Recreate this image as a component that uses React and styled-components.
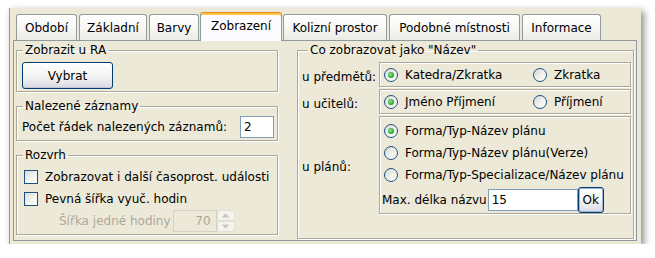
import React from "react";
import styled, { createGlobalStyle } from "styled-components";

const GlobalStyle = createGlobalStyle`
  html, body {
    margin: 0;
    padding: 0;
    background: #ffffff;
  }
  body {
    font-family: "DejaVu Sans", "Liberation Sans", sans-serif;
    font-size: 12px;
    color: #000000;
  }
  *, *::before, *::after {
    box-sizing: border-box;
  }
`;

const tabs = [
  { label: "Období", width: 61 },
  { label: "Základní", width: 68 },
  { label: "Barvy", width: 50 },
  { label: "Zobrazení", width: 82 },
  { label: "Kolizní prostor", width: 104 },
  { label: "Podobné místnosti", width: 131 },
  { label: "Informace", width: 79 },
];

export default function App() {
  return (
    <>
      <GlobalStyle />
      <Window>
        <TabRow>
          {tabs.map((t, i) => (
            <Tab key={t.label} $w={t.width} $active={i === 3}>
              {t.label}
            </Tab>
          ))}
        </TabRow>
        <Pane>
          <LeftColumn>
            <Group>
              <Title>Zobrazit u RA</Title>
              <GroupBody $pad="5px 5px 2px">
                <Button $w={91} $h={27}>Vybrat</Button>
              </GroupBody>
            </Group>
            <Group>
              <Title>Nalezené záznamy</Title>
              <GroupBody $pad="3px 3px 2px 5px">
                <Row>
                  <span>Počet řádek nalezených záznamů:</span>
                  <TextField $w={34} defaultValue="2" />
                </Row>
              </GroupBody>
            </Group>
            <Group>
              <Title>Rozvrh</Title>
              <GroupBody $pad="4px 7px 2px">
                <CheckRow>
                  <CheckBox />
                  Zobrazovat i další časoprost. události
                </CheckRow>
                <CheckRow>
                  <CheckBox />
                  Pevná šířka vyuč. hodin
                </CheckRow>
                <SpinRow>
                  <DisabledLabel>Šířka jedné hodiny</DisabledLabel>
                  <Spinner>
                    <SpinValue>70</SpinValue>
                    <SpinButtons>
                      <SpinArrow>
                        <svg width="9" height="5" viewBox="0 0 9 5">
                          <path d="M0.5 4.5 L4.5 0.5 L8.5 4.5 Z" fill="#c9c7ba" />
                        </svg>
                      </SpinArrow>
                      <SpinArrow>
                        <svg width="9" height="5" viewBox="0 0 9 5">
                          <path d="M0.5 0.5 L4.5 4.5 L8.5 0.5 Z" fill="#c9c7ba" />
                        </svg>
                      </SpinArrow>
                    </SpinButtons>
                  </Spinner>
                </SpinRow>
              </GroupBody>
            </Group>
          </LeftColumn>

          <RightGroup>
            <Title>Co zobrazovat jako "Název"</Title>
            <NameGrid>
              <RowLabel>u předmětů:</RowLabel>
              <OptionBox>
                <PairRow>
                  <RadioItem>
                    <Radio $on />
                    Katedra/Zkratka
                  </RadioItem>
                  <RadioItem>
                    <Radio />
                    Zkratka
                  </RadioItem>
                </PairRow>
              </OptionBox>

              <RowLabel>u učitelů:</RowLabel>
              <OptionBox>
                <PairRow>
                  <RadioItem>
                    <Radio $on />
                    Jméno Příjmení
                  </RadioItem>
                  <RadioItem>
                    <Radio />
                    Příjmení
                  </RadioItem>
                </PairRow>
              </OptionBox>

              <RowLabel>u plánů:</RowLabel>
              <OptionBox $col>
                <RadioLine>
                  <Radio $on />
                  Forma/Typ-Název plánu
                </RadioLine>
                <RadioLine>
                  <Radio />
                  Forma/Typ-Název plánu(Verze)
                </RadioLine>
                <RadioLine>
                  <Radio />
                  Forma/Typ-Specializace/Název plánu
                </RadioLine>
                <MaxRow>
                  <span>Max. délka názvu</span>
                  <TextField $w={90} defaultValue="15" />
                  <Button $w={26} $h={26} $focus>Ok</Button>
                </MaxRow>
              </OptionBox>
            </NameGrid>
          </RightGroup>
        </Pane>
      </Window>
    </>
  );
}

const Window = styled.div`
  margin: 8px 0 0 9px;
  width: 632px;
  height: 236px;
  background: #ece9d8;
  border-left: 1px solid #9c9a8e;
  padding: 4px 4px 3px 3px;
  display: flex;
  flex-direction: column;
  box-shadow: 3px 3px 7px rgba(0, 0, 0, 0.45);
`;

const TabRow = styled.div`
  height: 28px;
  display: flex;
  align-items: flex-end;
  gap: 2px;
  padding-left: 3px;
  flex-shrink: 0;
`;

const Tab = styled.div`
  position: relative;
  width: ${(p) => p.$w}px;
  height: ${(p) => (p.$active ? 29 : 26)}px;
  margin: ${(p) => (p.$active ? "0 -1px -1px -1px" : "0")};
  z-index: ${(p) => (p.$active ? 1 : 0)};
  display: flex;
  align-items: center;
  justify-content: center;
  padding-bottom: ${(p) => (p.$active ? 3 : 0)}px;
  border: 1px solid #919b9c;
  border-top-color: ${(p) => (p.$active ? "#e68b2c" : "#919b9c")};
  border-bottom: none;
  border-radius: 3px 3px 0 0;
  background: ${(p) =>
    p.$active
      ? "#fcfcfe"
      : "linear-gradient(180deg, #ffffff 0%, #f6f6f3 55%, #ecebe5 100%)"};
  box-shadow: ${(p) => (p.$active ? "inset 0 2px 0 #ffc83c" : "none")};
  white-space: nowrap;
`;

const Pane = styled.div`
  flex: 1;
  display: flex;
  gap: 19px;
  border: 1px solid #919b9c;
  padding: 2px 2px 1px 2px;
`;

const LeftColumn = styled.div`
  width: 262px;
  display: flex;
  flex-direction: column;
  gap: 7px;
  align-self: flex-start;
`;

const Group = styled.fieldset`
  margin: 0;
  padding: 0;
  min-width: 0;
  border: 1px solid #aca899;
  box-shadow: inset 1px 1px 0 #ffffff, 1px 1px 0 #ffffff;
`;

const RightGroup = styled(Group)`
  width: 337px;
  padding: 5px 2px 0 4px;
`;

const Title = styled.legend`
  margin-left: 6px;
  padding: 0 2px;
  line-height: 14px;
  height: 14px;
  white-space: nowrap;
`;

const GroupBody = styled.div`
  padding: ${(p) => p.$pad};
`;

const Row = styled.div`
  display: flex;
  align-items: center;
  justify-content: space-between;
  height: 22px;
`;

const TextField = styled.input`
  width: ${(p) => p.$w}px;
  height: 22px;
  border: 1px solid #7f9db9;
  background: #ffffff;
  padding: 0 3px;
  font: inherit;
  color: #000;
  outline: none;
`;

const Button = styled.div`
  width: ${(p) => p.$w}px;
  height: ${(p) => p.$h}px;
  display: flex;
  align-items: center;
  justify-content: center;
  border: 1px solid #003c74;
  border-radius: 3px;
  background: linear-gradient(
    180deg,
    #ffffff 0%,
    #f5f5f3 45%,
    #e6e6ec 80%,
    #d5d5df 100%
  );
  box-shadow: ${(p) =>
    p.$focus
      ? "inset 0 0 0 1px #9fb4d8"
      : "inset 0 -1px 0 #c8c8d4"};
  color: #000;
`;

const CheckRow = styled.label`
  display: flex;
  align-items: center;
  gap: 7px;
  height: 22px;
  white-space: nowrap;
`;

const CheckBox = styled.span`
  width: 14px;
  height: 14px;
  flex-shrink: 0;
  border: 1px solid #1c5180;
  background: linear-gradient(135deg, #dcdcd7 0%, #f3f3ef 55%, #ffffff 100%);
`;

const SpinRow = styled.div`
  display: flex;
  align-items: center;
  height: 22px;
  padding-left: 35px;
  gap: 2px;
`;

const DisabledLabel = styled.span`
  color: #aca899;
  white-space: nowrap;
`;

const Spinner = styled.div`
  display: flex;
  height: 22px;
`;

const SpinValue = styled.div`
  width: 44px;
  border: 1px solid #d5d2c4;
  display: flex;
  align-items: center;
  justify-content: flex-end;
  padding-right: 5px;
  color: #aca899;
`;

const SpinButtons = styled.div`
  width: 18px;
  display: flex;
  flex-direction: column;
`;

const SpinArrow = styled.div`
  flex: 1;
  display: flex;
  align-items: center;
  justify-content: center;
  border: 1px solid #e3e1d6;
  border-radius: 2px;
  background: #f4f3ee;
`;

const NameGrid = styled.div`
  display: grid;
  grid-template-columns: 77px 252px;
  grid-template-rows: 25px 25px 98px;
  row-gap: 2px;
`;

const RowLabel = styled.div`
  align-self: center;
  padding-top: 4px;
  white-space: nowrap;
`;

const OptionBox = styled.div`
  border: 1px solid #aca899;
  box-shadow: inset 1px 1px 0 #ffffff, 1px 1px 0 #ffffff;
  padding: ${(p) => (p.$col ? "3px 4px 0" : "0 4px")};
  display: flex;
  flex-direction: column;
  justify-content: ${(p) => (p.$col ? "flex-start" : "center")};
`;

const PairRow = styled.div`
  display: grid;
  grid-template-columns: 149px auto;
  align-items: center;
`;

const RadioItem = styled.label`
  display: flex;
  align-items: center;
  gap: 7px;
  white-space: nowrap;
`;

const RadioLine = styled(RadioItem)`
  height: 22px;
`;

const Radio = styled.span`
  position: relative;
  width: 14px;
  height: 14px;
  flex-shrink: 0;
  border-radius: 50%;
  border: 1px solid #1c5180;
  background: linear-gradient(135deg, #d6d6d0 0%, #f0f0ec 50%, #ffffff 100%);
  &::after {
    content: "";
    display: ${(p) => (p.$on ? "block" : "none")};
    position: absolute;
    left: 3px;
    top: 3px;
    width: 6px;
    height: 6px;
    border-radius: 50%;
    background: radial-gradient(circle at 40% 40%, #8fe38f 0%, #21a121 70%);
  }
`;

const MaxRow = styled.div`
  display: flex;
  align-items: center;
  height: 26px;
  margin: 1px 0 0 -2px;
  gap: 0;
  span {
    margin-right: 1px;
    white-space: nowrap;
  }
`;
